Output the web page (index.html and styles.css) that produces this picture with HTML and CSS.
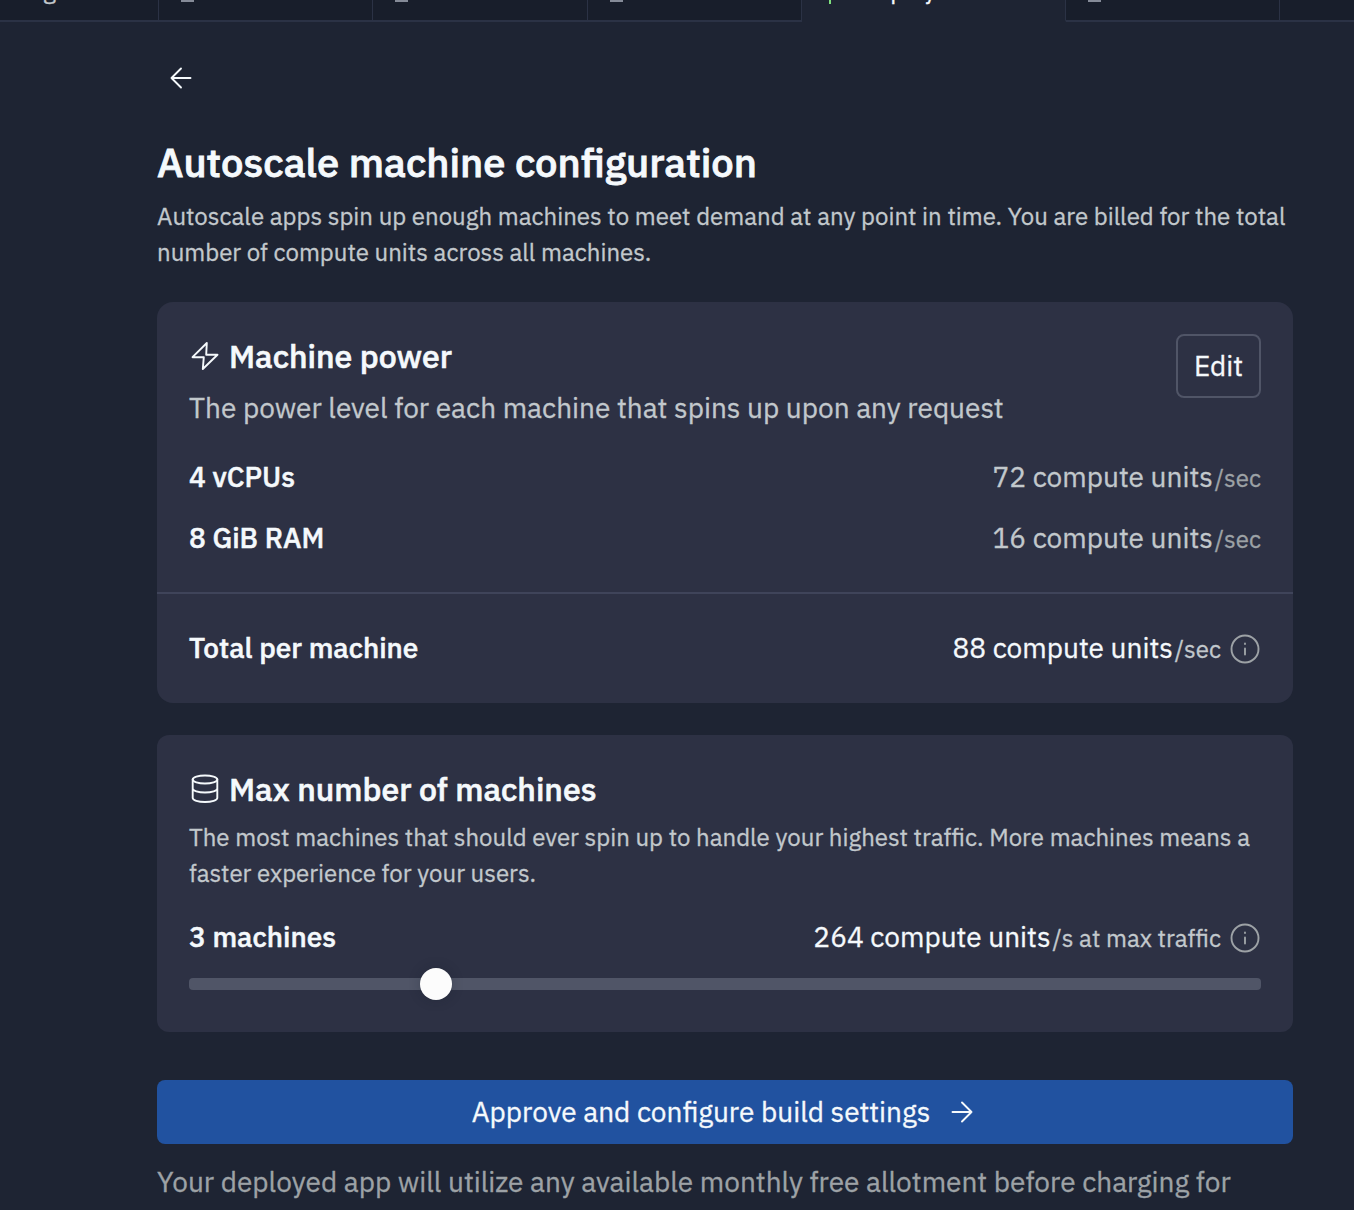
FILE: index.html
```html
<!DOCTYPE html>
<html lang="en">
<head>
<meta charset="utf-8">
<title>Autoscale machine configuration</title>
<link rel="stylesheet" href="styles.css">
</head>
<body>
<nav class="tabs">
  <div class="tab tab-first"><span class="tab-label">g</span></div>
  <div class="tab"><svg class="tab-icon" viewBox="0 0 32 32"><path d="M16 27h13"/></svg></div>
  <div class="tab"><svg class="tab-icon" viewBox="0 0 32 32"><path d="M16 27h13"/></svg></div>
  <div class="tab"><svg class="tab-icon" viewBox="0 0 32 32"><path d="M16 27h13"/></svg></div>
  <div class="tab tab-active"><svg class="tab-icon tab-icon-green" viewBox="0 0 32 32"><path d="M22 12v19"/></svg><span class="tab-label">Deploy</span></div>
  <div class="tab"><svg class="tab-icon" viewBox="0 0 32 32"><path d="M16 27h13"/></svg></div>
  <div class="tab tab-last"></div>
</nav>
<main class="page">
  <button class="back" aria-label="Back"><svg class="icon" viewBox="0 0 32 32"><path d="M25.500 16H6.500M16 6.500L6.500 16L16 25.500"/></svg></button>
  <h1 class="title">Autoscale machine configuration</h1>
  <p class="lead">Autoscale apps spin up enough machines to meet demand at any point in time. You are billed for the total<br>number of compute units across all machines.</p>

  <section class="card power">
    <div class="card-body">
      <div class="card-head">
        <div class="card-intro">
          <h2 class="heading"><svg class="icon" viewBox="0 0 32 32"><path d="M17.800 3L3.500 17.200H14.800L13.800 29L28.500 14.700H17.200z"/></svg>Machine power</h2>
          <p class="caption">The power level for each machine that spins up upon any request</p>
        </div>
        <button class="edit">Edit</button>
      </div>
      <div class="rows">
        <div class="row"><span class="name">4 vCPUs</span><span class="cost">72 compute units<span class="unit">/sec</span></span></div>
        <div class="row"><span class="name">8 GiB RAM</span><span class="cost">16 compute units<span class="unit">/sec</span></span></div>
      </div>
    </div>
    <div class="card-foot row">
      <span class="name">Total per machine</span>
      <span class="total"><span class="cost cost-strong">88 compute units<span class="unit">/sec</span></span><svg class="icon info" viewBox="0 0 32 32"><circle cx="16" cy="16" r="13.500"/><path d="M16 15.500v6M16 10.500v.5"/></svg></span>
    </div>
  </section>

  <section class="card machines">
    <h2 class="heading"><svg class="icon" viewBox="0 0 32 32"><ellipse cx="16" cy="6.500" rx="12.300" ry="4"/><path d="M3.700 6.500v18.500c0 2.200 5.500 4 12.300 4s12.300-1.800 12.300-4V6.500M3.700 15.500c0 2.200 5.500 4 12.300 4s12.300-1.800 12.300-4"/></svg>Max number of machines</h2>
    <p class="hint">The most machines that should ever spin up to handle your highest traffic. More machines means a<br>faster experience for your users.</p>
    <div class="row row-total">
      <span class="name">3 machines</span>
      <span class="total"><span class="cost cost-strong">264 compute units<span class="unit">/s at max traffic</span></span><svg class="icon info" viewBox="0 0 32 32"><circle cx="16" cy="16" r="13.500"/><path d="M16 15.500v6M16 10.500v.5"/></svg></span>
    </div>
    <div class="slider"><div class="track"></div><div class="thumb"></div></div>
  </section>

  <button class="approve"><span class="approve-label">Approve and configure build settings</span><svg class="icon" viewBox="0 0 32 32"><path d="M6.500 16H25.500M16 6.500L25.500 16L16 25.500"/></svg></button>
  <p class="note">Your deployed app will utilize any available monthly free allotment before charging for</p>
</main>
</body>
</html>
```
FILE: styles.css
```css
* { box-sizing: border-box; margin: 0; }
body {
  height: 1210px;
  overflow: hidden;
  background: #1e2433;
  color: #f5f9fc;
  font-family: "IBM Plex Sans", Roboto, "Noto Sans", sans-serif;
  font-size: 28px;
  line-height: 45px;
  -webkit-text-stroke: .3px currentColor;
}
button { font: inherit; color: inherit; background: none; border: 0; padding: 0; }
.icon { width: 32px; height: 32px; flex: none; fill: none; stroke: currentColor; stroke-width: 1.900; stroke-linecap: round; stroke-linejoin: round; }

.tabs { display: flex; height: 64px; margin-top: -42px; }
.tab { width: 214.330px; flex: none; display: flex; align-items: center; padding-left: 6px; background: #181e2b; border-right: 1px solid #2b3245; border-bottom: 2px solid #2b3245; }
.tab-first { width: 159px; padding-left: 43px; }
.tab-active { width: 264px; gap: 21px; background: #1e2433; border-bottom-color: #1e2433; }
.tab-last { flex: 1; width: auto; border-right: 0; }
.tab-label { padding-top: 2px; font-size: 24px; }
.tab-first .tab-label { color: #c2c8cc; }
.tab-icon { width: 32px; height: 32px; fill: none; stroke: #858b98; stroke-width: 4; }
.tab-icon-green { stroke: #7ee07e; stroke-width: 2; }

.page { width: 1136px; margin-left: 157px; }
.back { display: flex; margin: 40px 0 0 8px; }
.title { margin-top: 40px; font-size: 40px; line-height: 56px; font-weight: 500; -webkit-text-stroke-width: .8px; }
.lead { margin-top: 8px; font-size: 24px; line-height: 36px; color: #c2c8cc; white-space: nowrap; }

.card { background: #2d3144; }
.power { margin-top: 32px; border-radius: 16px; }
.card-body { padding: 32px; }
.card-head { display: flex; justify-content: space-between; align-items: flex-start; }
.heading { display: flex; align-items: center; gap: 8px; font-size: 32px; line-height: 45px; font-weight: 500; white-space: nowrap; -webkit-text-stroke-width: .6px; }
.heading .icon { margin-bottom: 2px; }
.caption { margin-top: 6px; color: #c2c8cc; white-space: nowrap; }
.edit { width: 85px; height: 64px; padding-bottom: 2px; border: 2px solid #505567; border-radius: 8px; }
.rows { display: grid; gap: 16px; margin-top: 24px; }
.row { display: flex; justify-content: space-between; white-space: nowrap; }
.name { font-weight: 500; -webkit-text-stroke-width: .5px; }
.cost { display: flex; align-items: baseline; gap: 2px; color: #c2c8cc; }
.unit { font-size: 24px; line-height: 32px; color: #9da2a6; }
.cost-strong { color: #f5f9fc; }
.cost-strong .unit { color: #c2c8cc; }
.total { display: flex; align-items: center; gap: 8px; }
.info { margin-top: 2px; color: #9da2a6; }
.card-foot { padding: 31px 32px 33px; border-top: 2px solid #3f445a; }

.machines { margin-top: 32px; padding: 32px; border-radius: 12px; }
.hint { margin: 7px 0 23px; font-size: 24px; line-height: 36px; color: #c2c8cc; white-space: nowrap; }
.slider { display: grid; align-items: center; height: 32px; margin-top: 9px; }
.track, .thumb { grid-area: 1 / 1; }
.track { height: 12px; border-radius: 4px; background: #505567; }
.thumb { width: 32px; height: 32px; margin-left: 231px; border-radius: 50%; background: #fcfcfc; box-shadow: 0 0 12px rgba(20, 26, 40, .25); }

.approve { display: flex; align-items: center; justify-content: center; gap: 16px; width: 100%; height: 64px; margin-top: 48px; border-radius: 8px; background: #2152a0; }
.approve-label { padding-bottom: 2px; }
.note { margin-top: 15px; color: #9da2a6; white-space: nowrap; }
```
